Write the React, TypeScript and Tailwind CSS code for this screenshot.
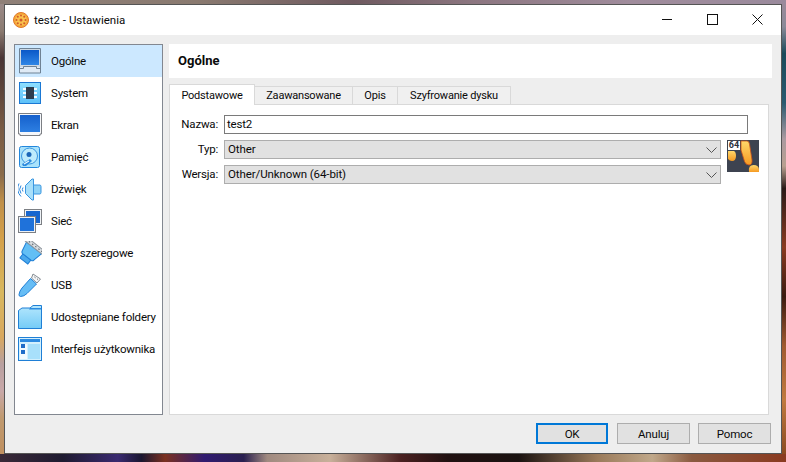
import React from "react";

const Monitor = () => (
  <svg width="24" height="26" viewBox="0 0 24 26">
    <defs><linearGradient id="scr" x1="0" y1="0" x2="0" y2="1"><stop offset="0" stopColor="#0a58c8" /><stop offset="1" stopColor="#2f86e6" /></linearGradient></defs>
    <path d="M1.5.5h21v24.500h-21z" fill="#dfeaf5" stroke="#6f8294" />
    <rect x="2" y="1" width="20" height="18" fill="#ccd8e4" />
    <rect x="3" y="2" width="18" height="15" fill="url(#scr)" />
    <path d="M1.500 20.500h4v-2h13v2h4" fill="none" stroke="#6f8294" />
  </svg>
);
const SystemIcon = () => (
  <svg width="24" height="24" viewBox="0 0 24 24">
    <defs><linearGradient id="sys" x1="0" y1="0" x2="0" y2="1"><stop offset="0" stopColor="#8fe0ff" /><stop offset="1" stopColor="#5cc0f8" /></linearGradient></defs>
    <rect x="1.500" y="1.500" width="21" height="21" fill="url(#sys)" stroke="#1a78d4" />
    <rect x="8" y="6" width="8" height="12" fill="#2e3d4d" />
    <path d="M5 7h3v2H5zM5 11h3v2H5zM5 15h3v2H5zM16 7h3v2h-3zM16 11h3v2h-3zM16 15h3v2h-3z" fill="#f2fbff" />
  </svg>
);
const Screen = () => (
  <svg width="24" height="24" viewBox="0 0 24 24">
    <path d="M.5.500h23v20.500h-1.500v1.500H2V21H.5z" fill="#f5f7fa" stroke="#7c7f84" />
    <defs><linearGradient id="scr2" x1="0" y1="0" x2="0" y2="1"><stop offset="0" stopColor="#1560cc" /><stop offset="1" stopColor="#2d7fe2" /></linearGradient></defs>
    <rect x="2" y="2" width="20" height="17" fill="url(#scr2)" />
  </svg>
);
const Disk = () => (
  <svg width="24" height="24" viewBox="0 0 24 24">
    <rect x="1.500" y="1.500" width="20" height="21" rx="2" fill="#a9e2fb" stroke="#2387dc" />
    <circle cx="11.500" cy="11" r="8" fill="#bdebfc" stroke="#3a96e0" />
    <circle cx="11" cy="9.500" r="2.500" fill="#1a66b8" />
    <path d="M4 19l8-5 2 2-6 5H5z" fill="#2d8ade" />
    <path d="M6 19l5-3" stroke="#e8f8ff" strokeWidth="1.200" />
  </svg>
);
const Speaker = () => (
  <svg width="24" height="24" viewBox="0 0 24 24">
    <path d="M7.500 8.500 14 2h1.500v21H14l-6.500-6.500z" fill="#a8dffa" stroke="#3a96e0" />
    <path d="M15.500 8H22a1.500 1.500 0 0 1 1 1.500v6a1.500 1.500 0 0 1-1 1.500h-6.500z" fill="#8ed2f6" stroke="#3a96e0" />
    <path d="M3 8.500a7 7 0 0 0 0 8M1 6.500a11 11 0 0 0 2 13M5 10.500a3.500 3.500 0 0 0 0 4" fill="none" stroke="#2a87dc" strokeWidth="1" />
  </svg>
);
const Network = () => (
  <svg width="24" height="24" viewBox="0 0 24 24">
    <rect x="6.500" y="0.500" width="17" height="15" fill="#eef2f6" stroke="#7c7f84" />
    <rect x="8" y="2" width="14" height="12" fill="#1766cf" />
    <rect x="0.500" y="7.500" width="17" height="16" fill="#eef2f6" stroke="#7c7f84" />
    <rect x="2" y="9" width="14" height="13" fill="#1f72da" />
  </svg>
);
const Serial = () => (
  <svg width="24" height="24" viewBox="0 0 24 24">
    <g transform="rotate(38 12 12)">
      <rect x="7" y="17" width="10" height="5" fill="#4aa8ec" stroke="#1f7fd6" />
      <path d="M2.500 5.500h19l-2 9.500q-.5 2-2 2h-11q-1.500 0-2-2z" fill="#63bff5" stroke="#1f7fd6" />
      <rect x="1" y="1.500" width="22" height="4" fill="#d8dde1" stroke="#8f969c" />
      <path d="M4 3.500h1.500M8 3.500h1.500M12 3.500h1.500M16 3.500h1.500M19.500 3.500h1.500" stroke="#5b636a" />
    </g>
  </svg>
);
const Usb = () => (
  <svg width="24" height="26" viewBox="0 0 24 26">
    <path d="M15 2 22.500 7 19 11 13.500 6z" fill="#f2f4f6" stroke="#858c92" />
    <path d="m16.500 5 1 .8M19 6.800l.8.6" stroke="#555" />
    <path d="M12.500 6.500 18.500 12 9 21.500Q6 24.500 2.500 24.500 1 24.500 1 22.500 1.500 19 4 16z" fill="#66bdf5" stroke="#1f7fd6" />
  </svg>
);
const Folder = () => (
  <svg width="24" height="24" viewBox="0 0 24 24">
    <defs><linearGradient id="fold" x1="0" y1="0" x2="0" y2="1"><stop offset="0" stopColor="#b5e7fd" /><stop offset="1" stopColor="#74cbf7" /></linearGradient></defs>
    <path d="M.5 5.500 4 3h8l3-2.500h8.500v23H.5z" fill="url(#fold)" stroke="#1f7fd6" />
    <path d="M12 3h11v1.500H11z" fill="#2a8be0" />
  </svg>
);
const WindowIcon = () => (
  <svg width="24" height="24" viewBox="0 0 24 24">
    <rect x=".5" y=".5" width="23" height="23" fill="#d3f0fd" stroke="#1f7fd6" />
    <rect x="2" y="2" width="20" height="3" fill="#2c8ae0" />
    <rect x="2" y="7" width="7" height="15" fill="#f2fbff" />
    <rect x="3" y="7" width="4" height="4" fill="#1f6dc8" />
    <rect x="3" y="13" width="4" height="4" fill="#1f6dc8" />
    <rect x="10" y="7" width="12" height="15" fill="#a8e0fb" />
  </svg>
);
const AppIcon = () => (
  <svg width="16" height="16" viewBox="0 0 16 16">
    <circle cx="8" cy="8" r="7.500" fill="#f5a93b" stroke="#e0782a" />
    <circle cx="8" cy="8" r="5.500" fill="#f9c24e" />
    <g fill="#d2592c">
      <circle cx="8" cy="8" r="1.500" /><circle cx="8" cy="3.500" r="1" /><circle cx="8" cy="12.500" r="1" />
      <circle cx="3.500" cy="8" r="1" /><circle cx="12.500" cy="8" r="1" /><circle cx="4.800" cy="4.800" r="1" />
      <circle cx="11.200" cy="4.800" r="1" /><circle cx="4.800" cy="11.200" r="1" /><circle cx="11.200" cy="11.200" r="1" />
    </g>
  </svg>
);
const Chevron = () => (
  <svg width="11" height="6" viewBox="0 0 11 6" className="shrink-0">
    <path d="m.5.500 5 5 5-5" fill="none" stroke="#555" />
  </svg>
);
const OsIcon = () => (
  <div className="relative w-8 h-8 shrink-0">
    <svg width="32" height="32" viewBox="0 0 32 32">
      <rect width="32" height="32" fill="#3d4350" />
      <defs><linearGradient id="amb" x1="0" y1="0" x2="0" y2="1"><stop offset="0" stopColor="#ffd76a" /><stop offset="1" stopColor="#f59a22" /></linearGradient></defs>
      <path d="M14 1h6q2 0 2.500 3L25 20q.5 5-3 5-3 0-4.500-3.500L14 10z" fill="url(#amb)" stroke="#c8501c" strokeWidth=".8" />
      <path d="M1 11h6q2 1 2 5 0 5-4 5-2.500 0-4-2z" fill="url(#amb)" />
      <path d="M22 32q-1-7 4.500-7 5.500 0 5.500 5v2z" fill="url(#amb)" />
    </svg>
    <span className="absolute left-[1px] top-[1px] w-[12px] h-[9px] bg-white text-[9px] leading-[9px] text-center font-bold tracking-normal text-[#2c3240]">64</span>
  </div>
);

const items: [string, React.ReactNode][] = [
  ["Ogólne", <Monitor />],
  ["System", <SystemIcon />],
  ["Ekran", <Screen />],
  ["Pamięć", <Disk />],
  ["Dźwięk", <Speaker />],
  ["Sieć", <Network />],
  ["Porty szeregowe", <Serial />],
  ["USB", <Usb />],
  ["Udostępniane foldery", <Folder />],
  ["Interfejs użytkownika", <WindowIcon />],
];

const Select = ({ value }: { value: string }) => (
  <div className="flex-1 h-[19px] bg-[#e1e1e1] border border-[#adadad] flex items-center justify-between pl-[3px] pr-[3px]">
    <span className="tracking-[-0.1px] mb-[2px]">{value}</span>
    <Chevron />
  </div>
);
const Btn = ({ label, primary }: { label: string; primary?: boolean }) => (
  <div className={primary ? "w-[72px] h-[21px] mr-[1px] bg-[#e1e1e1] border-2 border-[#0078d7] flex items-center justify-center" : "w-[73px] h-[21px] bg-[#e1e1e1] border border-[#adadad] flex items-center justify-center"}>
    {label}
  </div>
);

export default function App() {
  return (
    <div className="w-[786px] h-[462px] overflow-hidden flex flex-col text-[11.5px] leading-[16px] tracking-[-0.2px] text-[#0a0a0a] font-['Roboto','Noto_Sans',sans-serif]">
      <div className="h-[4px] shrink-0 bg-[linear-gradient(90deg,#8f8078_0%,#8a7a70_25%,#6f5a60_45%,#8c7680_60%,#a08c9c_80%,#9a8a9c_100%)]" />
      <div className="flex h-[450px] shrink-0">
        <div className="w-[4px] shrink-0 bg-[linear-gradient(180deg,#9a8a88_0%,#8a7a70_6%,#4a3535_12%,#5a4238_18%,#7a5c45_28%,#8a6b4a_38%,#c0904a_44%,#d4a04a_52%,#d8b860_64%,#d8a860_74%,#b8a0a0_80%,#c8a8a8_86%,#c09a70_92%,#c09060_100%)]" />
        <div className="w-[778px] shrink-0 border border-[#555555] bg-[#eeeeee] flex flex-col">
          <div className="h-[30px] shrink-0 bg-white flex items-center pl-[8px]">
            <AppIcon />
            <span className="ml-[5px] tracking-normal">test2 - Ustawienia</span>
            <div className="ml-auto flex items-center -mt-[1px]">
              <svg width="11" height="11" viewBox="0 0 11 11" className="mr-[34px]"><path d="M0 5.500h10" stroke="#111" /></svg>
              <svg width="11" height="11" viewBox="0 0 11 11" className="mr-[34px]"><rect x=".5" y=".5" width="10" height="10" fill="none" stroke="#111" /></svg>
              <svg width="11" height="11" viewBox="0 0 11 11" className="mr-[18px]"><path d="m.5.500 10 10m0-10-10 10" stroke="#111" /></svg>
            </div>
          </div>
          <div className="flex-1 flex flex-col pt-[9px] pl-[9px] pr-[9px] pb-[9px] min-h-0">
            <div className="flex gap-[6px] h-[371px] shrink-0">
              <div className="w-[149px] shrink-0 bg-white border border-[#828790] flex flex-col">
                {items.map(([label, icon], i) => (
                  <div key={label} className={i === 0 ? "h-[32px] flex items-center bg-[#cce8ff]" : "h-[32px] flex items-center"}>
                    <span className="w-[24px] ml-[3px] flex justify-center shrink-0">{icon}</span>
                    <span className="ml-[9px] whitespace-nowrap">{label}</span>
                  </div>
                ))}
              </div>
              <div className="w-[603px] shrink-0 flex flex-col">
                <div className="h-[34px] shrink-0 bg-white flex items-center pl-[9px] text-[13px] font-bold tracking-normal">Ogólne</div>
                <div className="flex items-end h-[26px] shrink-0 relative z-10 text-[11px] tracking-[-0.2px]">
                  <div className="h-[21px] -mb-[1px] pt-[1px] w-[86px] bg-white border border-b-0 border-[#d9d9d9] flex items-center justify-center">Podstawowe</div>
                  <div className="h-[19px] -mb-[1px] w-[98px] bg-[#f0f0f0] border border-l-0 border-[#d9d9d9] flex items-center justify-center">Zaawansowane</div>
                  <div className="h-[19px] -mb-[1px] w-[45px] bg-[#f0f0f0] border border-l-0 border-[#d9d9d9] flex items-center justify-center">Opis</div>
                  <div className="h-[19px] -mb-[1px] w-[113px] bg-[#f0f0f0] border border-l-0 border-[#d9d9d9] flex items-center justify-center">Szyfrowanie dysku</div>
                </div>
                <div className="w-[600px] flex-1 bg-white border border-[#d9d9d9] pt-[10px] pl-[11px] pr-[9px] flex flex-col">
                  <div className="flex items-center h-[19px]">
                    <span className="w-[37px] text-right mb-[2px]">Nazwa:</span>
                    <div className="ml-[6px] w-[524px] h-[19px] border border-[#7a7a7a] flex items-center pl-[2px]"><span className="mb-[2px]">test2</span></div>
                  </div>
                  <div className="flex mt-[6px] gap-[6px]">
                    <div className="flex-1 flex flex-col gap-[6px]">
                      <div className="flex items-center"><span className="w-[37px] text-right mr-[6px] mb-[2px]">Typ:</span><Select value="Other" /></div>
                      <div className="flex items-center"><span className="w-[37px] text-right mr-[6px] mb-[2px]">Wersja:</span><Select value="Other/Unknown (64-bit)" /></div>
                    </div>
                    <OsIcon />
                  </div>
                </div>
              </div>
            </div>
            <div className="flex justify-end gap-[8px] mt-[8px] pr-[1px]">
              <Btn label="OK" primary />
              <Btn label="Anuluj" />
              <Btn label="Pomoc" />
            </div>
          </div>
        </div>
        <div className="w-[4px] shrink-0 bg-[linear-gradient(180deg,#9a8a9a_0%,#8a8a98_5%,#1a4a5a_11%,#2a5a70_22%,#aa9aa0_30%,#b8a090_36%,#2a1a18_41%,#8a3a20_54%,#3a1a10_65%,#a05a30_76%,#c07a40_88%,#8a4a20_100%)]" />
      </div>
      <div className="h-[8px] shrink-0 bg-[linear-gradient(90deg,#3a2a38_0%,#1e1a30_8%,#3a2a70_15%,#1a1630_18%,#7a3020_21%,#301a70_26%,#2a2050_31%,#a08a80_34%,#c8b09a_42%,#4a2020_51%,#201010_57%,#1a1210_66%,#9a7a5a_76%,#c0a88a_83%,#8a5a40_88%,#8a3a20_100%)]" />
    </div>
  );
}
